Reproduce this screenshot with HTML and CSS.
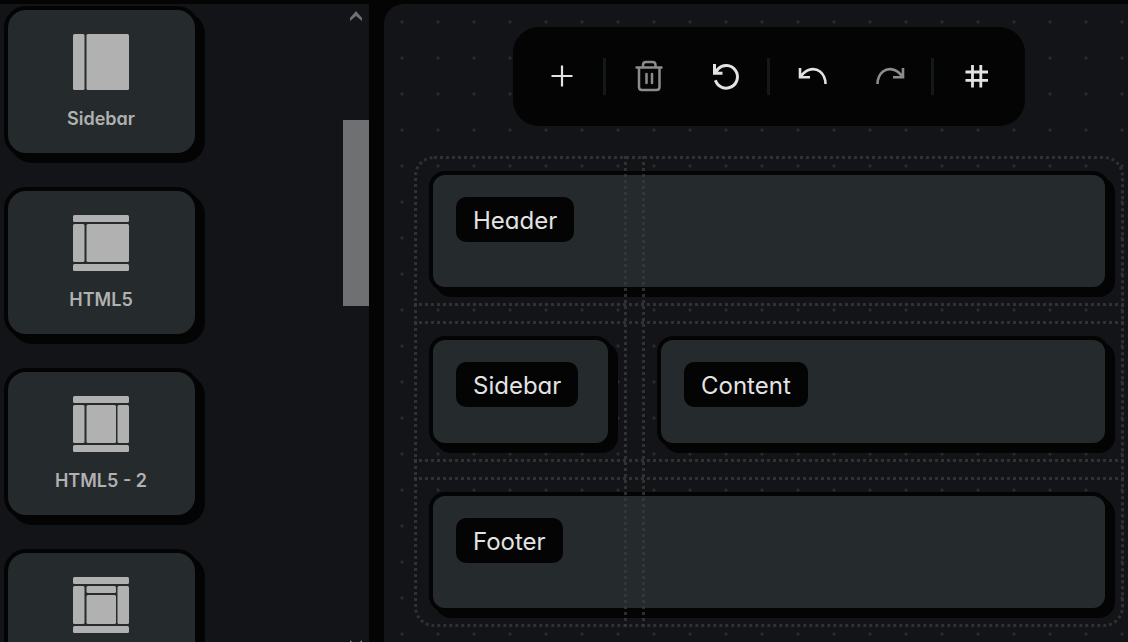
FILE: index.html
```html
<!DOCTYPE html>
<html lang="en">
<head>
<title>Grid Layout Editor</title>
<meta charset="UTF-8">
<meta name="viewport" content="width=device-width, initial-scale=1">
<link rel="stylesheet" href="styles.css">
</head>
<body>
  <div class="app">

    <aside class="templates">
      <div class="template-list">
        <button class="template" type="button">
          <svg class="template-icon" viewBox="0 0 56 56" aria-hidden="true">
            <rect width="11.5" height="56" rx="1.5"/>
            <rect x="13.5" width="42.5" height="56" rx="1.5"/>
          </svg>
          Sidebar
        </button>
        <button class="template" type="button">
          <svg class="template-icon" viewBox="0 0 56 56" aria-hidden="true">
            <rect width="56" height="7" rx="1.5"/>
            <rect y="9" width="11.5" height="38" rx="1.5"/>
            <rect x="13.5" y="9" width="42.5" height="38" rx="1.5"/>
            <rect y="49" width="56" height="7" rx="1.5"/>
          </svg>
          HTML5
        </button>
        <button class="template" type="button">
          <svg class="template-icon" viewBox="0 0 56 56" aria-hidden="true">
            <rect width="56" height="7" rx="1.5"/>
            <rect y="9" width="11.5" height="38" rx="1.5"/>
            <rect x="13.5" y="9" width="29.5" height="38" rx="1.5"/>
            <rect x="44.5" y="9" width="11.5" height="38" rx="1.5"/>
            <rect y="49" width="56" height="7" rx="1.5"/>
          </svg>
          HTML5 - 2
        </button>
        <button class="template" type="button" aria-label="HTML5 - 3">
          <svg class="template-icon" viewBox="0 0 56 56" aria-hidden="true">
            <rect width="56" height="7" rx="1.5"/>
            <rect y="9" width="11.5" height="38" rx="1.5"/>
            <rect x="13.5" y="9" width="29.5" height="7" rx="1.5"/>
            <rect x="13.5" y="18" width="29.5" height="29" rx="1.5"/>
            <rect x="44.5" y="9" width="11.5" height="38" rx="1.5"/>
            <rect y="49" width="56" height="7" rx="1.5"/>
          </svg>
        </button>
      </div>
      <div class="scrollbar">
        <svg class="scroll-arrow" viewBox="0 0 12 10" aria-hidden="true"><path d="M0 7 6 0l6 7v3L6 5 0 10z"/></svg>
        <div class="scroll-track"><div class="scroll-thumb"></div></div>
        <svg class="scroll-arrow" viewBox="0 0 12 10" aria-hidden="true"><path d="M0 3l6 7 6-7V0L6 5 0 0z"/></svg>
      </div>
    </aside>

    <main class="canvas">
      <div class="toolbar" role="toolbar">
        <button class="tool" type="button" aria-label="Add item">
          <svg class="tool-icon" viewBox="0 0 32 32"><path stroke-width="2.2" d="M16 5.5v21M5.5 16h21"/></svg>
        </button>
        <span class="divider"></span>
        <button class="tool" type="button" aria-label="Delete" disabled>
          <svg class="tool-icon" viewBox="0 0 32 32"><path stroke-width="2.5" stroke-linecap="round" stroke-linejoin="round" d="M3.500 7.500h25M10 7.500V5q0-3 3-3h6.500q3 0 3 3v2.500M6 7.500V27q0 3 3 3h14.500q3 0 3-3V7.500M13.500 14v9M19 14v9"/></svg>
        </button>
        <button class="tool" type="button" aria-label="Reset">
          <svg class="tool-icon" viewBox="0 0 32 32"><path stroke-width="3" d="M4.500 4v9.300H12.500M5 13 8 9A11.300 11.300 0 1 1 5.400 20.300"/></svg>
        </button>
        <span class="divider"></span>
        <button class="tool" type="button" aria-label="Undo">
          <svg class="tool-icon" viewBox="0 0 32 32"><path stroke-width="2.6" d="M3 8v9.200H13M3.500 17C9.500 7.500 18.500 8 23 11.500Q28.500 16 28.500 24"/></svg>
        </button>
        <button class="tool" type="button" aria-label="Redo" disabled>
          <svg class="tool-icon" viewBox="0 0 32 32"><path stroke-width="2.6" d="M29 8v9.200H19M28.500 17C22.500 7.500 13.500 8 9 11.500Q3.500 16 3.500 24"/></svg>
        </button>
        <span class="divider"></span>
        <button class="tool" type="button" aria-label="Toggle grid">
          <svg class="tool-icon" viewBox="0 0 32 32"><path stroke-width="2.8" d="M11.500 5v22.500M19.800 5v22.500M4.500 12h22.500M4.500 20.400h22.500"/></svg>
        </button>
      </div>

      <div class="layout-grid">
        <section class="item header"><span class="item-name">Header</span></section>
        <section class="item sidebar"><span class="item-name">Sidebar</span></section>
        <section class="item content"><span class="item-name">Content</span></section>
        <section class="item footer"><span class="item-name">Footer</span></section>

        <!-- track guides, drawn over the items -->
        <div class="guide frame"></div>
        <div class="guide col-1"></div>
        <div class="guide col-2"></div>
        <div class="guide row-1"></div>
        <div class="guide row-2"></div>
        <div class="guide row-3"></div>
      </div>
    </main>

  </div>
</body>
</html>
```
FILE: styles.css
```css
* {
    box-sizing: border-box;
}
body {
    margin: 0;
    height: 100vh;
    overflow: hidden;
    background-color: #040404;
    color: #e3e3e3;
    font-family: Inter, "Open Sans", sans-serif;
    font-feature-settings: "cv11";
}
button {
    font: inherit;
    font-feature-settings: inherit;
    cursor: pointer;
}
.app {
    display: flex;
    gap: 15px;
    height: calc(100vh + 16px);
    padding-top: 4px;
}

/* templates */
.templates {
    display: flex;
    flex: none;
    justify-content: space-between;
    width: 369px;
    overflow: hidden;
    background-color: #131418;
}
.template-list {
    display: flex;
    flex-direction: column;
    gap: 30px;
    padding: 2px 4px;
}
.template {
    display: flex;
    flex: none;
    flex-direction: column;
    align-items: center;
    justify-content: flex-start;
    gap: 17px;
    width: 195px;
    height: 151px;
    padding: 24px 9px 20px 8px;
    border: 4px solid #040404;
    border-radius: 22px;
    background-color: #252a2d;
    box-shadow: 6px 6px 0 #040404;
    color: #b1b1b1;
    font-size: 18px;
    font-weight: 600;
    line-height: 24px;
}
.template-icon {
    flex: none;
    width: 56px;
    height: 56px;
    fill: #b1b1b1;
}
.scrollbar {
    display: flex;
    flex-direction: column;
    align-items: center;
    width: 26px;
    padding: 7px 0 8px;
}
.scroll-arrow {
    flex: none;
    width: 12px;
    height: 10px;
    fill: #6f7072;
}
.scroll-track {
    flex: 1;
    width: 100%;
    padding-top: 99px;
}
.scroll-thumb {
    height: 186px;
    background-color: #6f7072;
}

/* canvas */
.canvas {
    flex: 1;
    margin-right: -26px;
    padding: 23px 30px;
    border-radius: 20px 0 0 0;
    background-color: #131418;
    background-image: radial-gradient(circle, #2c2d31 1px, transparent 2px);
    background-size: 36px 36px;
}
.toolbar {
    display: flex;
    align-items: center;
    width: fit-content;
    height: 99px;
    margin: 0 auto 30px;
    padding: 0 10px 1px;
    border-radius: 26px;
    background-color: #040404;
}
.tool {
    display: flex;
    align-items: center;
    justify-content: center;
    width: 77px;
    height: 76px;
    padding: 0;
    border: none;
    background: none;
    color: #e3e3e3;
}
.tool:disabled {
    color: #8c8c8c;
    cursor: default;
}
.tool-icon {
    width: 32px;
    height: 32px;
    fill: none;
    stroke: currentColor;
}
.divider {
    width: 3px;
    height: 37px;
    margin: 0 4px 0 3px;
    background-color: #13181b;
}

/* edited grid */
.layout-grid {
    display: grid;
    grid-template-columns: 213fr 482fr;
    grid-template-rows: 150px 141px 150px;
    gap: 15px;
}
.item {
    margin: 15px;
    padding: 22px 23px;
    border: 4px solid #040404;
    border-radius: 16px;
    background-color: #252a2d;
    box-shadow: 6px 6px 0 #040404;
}
.item-name {
    display: inline-block;
    padding: 2px 17px 0;
    border-radius: 10px;
    background-color: #040404;
    font-size: 24px;
    line-height: 43px;
}
.header {
    grid-area: 1 / 1 / 2 / 3;
}
.sidebar {
    grid-area: 2 / 1 / 3 / 2;
}
.content {
    grid-area: 2 / 2 / 3 / 3;
}
.footer {
    grid-area: 3 / 1 / 4 / 3;
}
.guide {
    border: 0 dotted rgba(56, 56, 56, 0.8);
    pointer-events: none;
}
.frame {
    grid-area: 1 / 1 / 4 / 3;
    border-width: 3px;
    border-radius: 20px;
}
.col-1 {
    grid-area: 1 / 1 / 4 / 2;
    border-right-width: 3px;
}
.col-2 {
    grid-area: 1 / 2 / 4 / 3;
    border-left-width: 3px;
}
.row-1 {
    grid-area: 1 / 1 / 2 / 3;
    border-bottom-width: 3px;
}
.row-2 {
    grid-area: 2 / 1 / 3 / 3;
    border-top-width: 3px;
    border-bottom-width: 3px;
}
.row-3 {
    grid-area: 3 / 1 / 4 / 3;
    border-top-width: 3px;
}
```
